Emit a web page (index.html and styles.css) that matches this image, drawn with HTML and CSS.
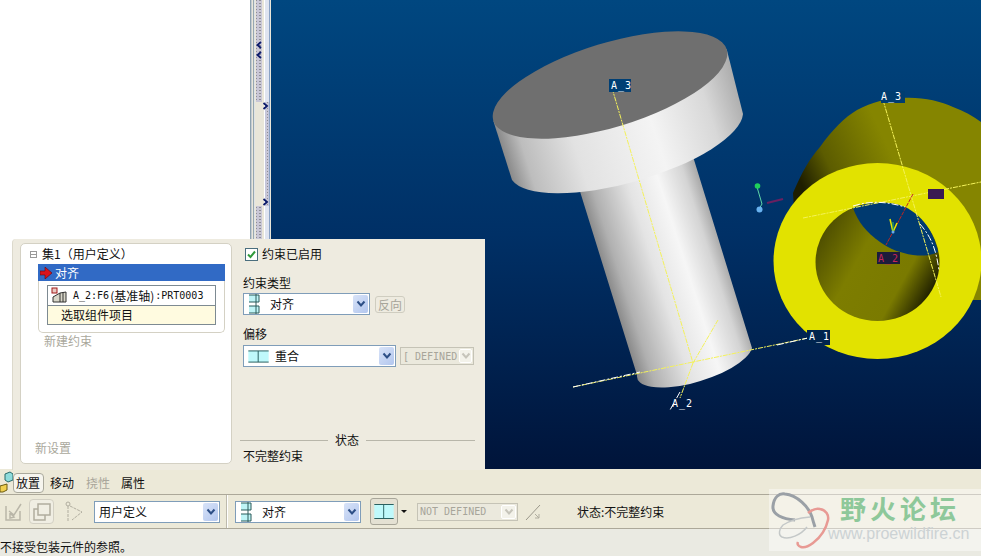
FILE: index.html
```html
<!DOCTYPE html>
<html lang="zh">
<head>
<meta charset="utf-8">
<title>Pro/E 装配</title>
<link rel="stylesheet" href="styles.css">
</head>
<body>
<svg class="defs" width="0" height="0" aria-hidden="true">
  <symbol id="chev" viewBox="0 0 10 8"><path d="M1.5 1.5 5 5.5 8.500 1.500" fill="none" stroke="currentColor" stroke-width="2"/></symbol>
  <symbol id="align" viewBox="0 0 12 20"><rect x="1" y="1" width="10" height="7" fill="#bff4f6"/><rect x="1" y="12" width="10" height="7" fill="#bff4f6"/><path d="M1 1h10v7H1M1 12h10v7H1M8 0v20" fill="none" stroke="#2a5a5a" stroke-width="1"/></symbol>
  <symbol id="mate" viewBox="0 0 32 18"><rect x=".5" y=".5" width="31" height="17" fill="#bff9fb"/><path d="M.5 .5h31M.5 17.500h31M15.500 .5v17" fill="none" stroke="#2a6060" stroke-width="1.500"/></symbol>
</svg>
<div class="app">
  <div class="work">
    <div class="tree-pane"></div>
    <div class="splitter">
      <svg width="21" height="469" viewBox="0 0 21 469">
        <defs><pattern id="dots" width="4" height="3" patternUnits="userSpaceOnUse"><rect width="4" height="3" fill="#c9c7d6"/><rect x="1" y="0" width="2" height="1" fill="#8f8f96"/></pattern></defs>
        <rect width="21" height="469" fill="#e9e6d9"/>
        <rect x="0" width="1" height="469" fill="#8fa3b0"/><rect x="1" width="1" height="469" fill="#c6ccd2"/>
        <rect x="3" width="1" height="469" fill="#97a7b0"/><rect x="4" width="1" height="469" fill="#dfe3e6"/>
        <rect x="6" y="0" width="6" height="102" fill="url(#dots)"/>
        <rect x="6" y="206" width="6" height="263" fill="url(#dots)"/>
        <rect x="14" y="0" width="1" height="469" fill="#fff"/>
        <rect x="15" y="0" width="4" height="102" fill="#dfe4f0"/>
        <rect x="15" y="102" width="4" height="104" fill="#c3c6dc"/>
        <rect x="16" y="102" width="2" height="104" fill="url(#dots)"/>
        <rect x="15" y="206" width="4" height="263" fill="#dfe4f0"/>
        <rect x="19" width="1" height="469" fill="#8aa2c4"/>
        <path d="M11 42 7.500 45 11 48M11 52 7.500 55 11 58" fill="none" stroke="#0b1a6a" stroke-width="1.800"/>
        <path d="M13.500 103 17 106 13.500 109M13.500 199 17 202 13.500 205" fill="none" stroke="#0b1a6a" stroke-width="1.800"/>
      </svg>
    </div>
    <div class="viewport">
      <svg class="scene" viewBox="271 0 710 469" width="710" height="469">
        <defs>
          <linearGradient id="bg" x1="0" y1="0" x2="0" y2="1"><stop offset="0" stop-color="#004780"/><stop offset=".5" stop-color="#003066"/><stop offset="1" stop-color="#00143a"/></linearGradient>
          <linearGradient id="head" gradientUnits="userSpaceOnUse" x1="505" y1="175" x2="745" y2="100"><stop offset="0" stop-color="#7d7d7d"/><stop offset=".1" stop-color="#bdbdbd"/><stop offset=".3" stop-color="#e2e2e2"/><stop offset=".62" stop-color="#f4f4f4"/><stop offset=".85" stop-color="#d8d8d8"/><stop offset="1" stop-color="#a9a9a9"/></linearGradient>
          <linearGradient id="shank" gradientUnits="userSpaceOnUse" x1="600" y1="290" x2="725" y2="250"><stop offset="0" stop-color="#6f6f6f"/><stop offset=".18" stop-color="#b0b0b0"/><stop offset=".45" stop-color="#e4e4e4"/><stop offset=".68" stop-color="#f6f6f6"/><stop offset=".88" stop-color="#d4d4d4"/><stop offset="1" stop-color="#a2a2a2"/></linearGradient>
          <linearGradient id="body" gradientUnits="userSpaceOnUse" x1="795" y1="170" x2="880" y2="130"><stop offset="0" stop-color="#1e1e00"/><stop offset=".35" stop-color="#5c5c00"/><stop offset="1" stop-color="#858500"/></linearGradient>
          <linearGradient id="hole" gradientUnits="userSpaceOnUse" x1="818" y1="235" x2="935" y2="300"><stop offset="0" stop-color="#4c4c00"/><stop offset=".35" stop-color="#7d7d00"/><stop offset=".72" stop-color="#7a7a00"/><stop offset="1" stop-color="#0c0c00"/></linearGradient>
        </defs>
        <rect x="271" y="0" width="710" height="469" fill="url(#bg)"/>

        <path d="M578 185 637 375A60 21 -17 0 0 752 348L691 150Z" fill="url(#shank)"/>
        <path d="M493.300 120.700 512 180A121 40 -16 0 0 743 114L726.700 49.300Z" fill="url(#head)"/>
        <ellipse cx="610" cy="85" rx="122" ry="42" transform="rotate(-17 610 85)" fill="#6f6f6f"/>

        <path class="axis-y" d="M612 88 693 363M573 387 693 362 808 338M693 363 718 320M693 363 680 398"/>
        <path class="axis-w" d="M573 387 640 372M777 345 808 338M680 392 670 410"/>

        <path d="M793 193C802 172 810 158 820 147C832 130 845 117 857 110C872 102 888 98 903 98C922 97 940 101 953 107C964 111 973 116 981 122V300H800Z" fill="url(#body)"/>
        <ellipse cx="877.500" cy="261" rx="104" ry="98" fill="#e2e200"/>
        <ellipse cx="877.500" cy="262" rx="62" ry="59" fill="url(#hole)"/>
        <path d="M853 208C870 201 890 201 905 207C922 215 934 232 938 252C930 256 922 256 913 255C900 253 890 249 880 242C866 232 858 222 853 208Z" fill="#003a70"/>

        <path class="axis-y" d="M883 100 941 297M803 218 981 182"/>
        <path class="axis-w" d="M853 206C872 200 888 202 905 207M920 224C932 238 936 250 939 270"/>
        <path d="M913 194 886 245" stroke="#c2251f" stroke-width="1" fill="none" stroke-dasharray="4 1"/>
        <path d="M897 223 893 232M890 219 893 232" stroke="#e6e600" stroke-width="1.500" fill="none"/>
        <path d="M893 222 893 232" stroke="#35c060" stroke-width="1" fill="none"/>
        <circle cx="893" cy="232" r="1.500" fill="#6aa8e8"/>

        <path d="M757 187 762 204 759 209" stroke="#5fd6a8" stroke-width="1" fill="none"/>
        <circle cx="757.500" cy="186" r="2.800" fill="#1fd05a"/>
        <circle cx="759.500" cy="209.500" r="3" fill="#68b2f0"/>
        <path d="M767 203 783 199" stroke="#6a2060" stroke-width="2" fill="none"/>

        <g class="labels">
          <rect x="609" y="79" width="22" height="13" fill="#003f74"/>
          <text x="611" y="89">A_3</text>
          <rect x="881" y="91" width="24" height="12" fill="#003d70"/>
          <text x="881" y="100">A_3</text>
          <rect x="807" y="330" width="23" height="15" fill="#00244e"/>
          <text x="809" y="340">A_1</text>
          <text x="672" y="407">A_2</text>
          <rect x="877" y="252" width="23" height="12" fill="#1c1c3c"/>
          <text x="878" y="262" class="red">A_2</text>
          <rect x="928" y="189" width="16" height="10" fill="#3a1a52"/>
        </g>
      </svg>
    </div>
  </div>

  <div class="tabs">
    <svg class="tab-icon" width="13" height="24" viewBox="0 0 13 24">
      <path d="M5 3 10 1 13 3V9L8 11 5 9Z" fill="#8fdcdc" stroke="#2a6a6a"/>
      <path d="M0 15 7 13V19L3 21 0 21Z" fill="#f0d050" stroke="#6a5a10"/>
    </svg>
    <span class="tab on">放置</span>
    <span class="tab">移动</span>
    <span class="tab off">挠性</span>
    <span class="tab">属性</span>
  </div>

  <div class="toolbar">
    <svg class="tool" width="20" height="22" viewBox="0 0 20 22"><path d="M2 5V19H16V10M5 10 10 14 17 3M6 17V12L10 16Z" fill="none" stroke="#b9b6a8" stroke-width="1.500"/></svg>
    <span class="tool-btn"><svg width="20" height="20" viewBox="0 0 20 20"><path d="M6 2H18V13H13V18H2V7H6ZM6 7V13H13" fill="none" stroke="#b0ad9f" stroke-width="1.500"/></svg></span>
    <svg class="tool tool-c" width="20" height="22" viewBox="0 0 20 22"><circle cx="4" cy="3" r="2" fill="none" stroke="#b0ad9f"/><path d="M4 5V20M6 5 18 11 8 19" fill="none" stroke="#b0ad9f" stroke-dasharray="3 1"/></svg>
    <div class="select s-user"><span class="val">用户定义</span><span class="arrow"><svg width="10" height="8"><use href="#chev"/></svg></span></div>
    <span class="vsep"></span>
    <div class="select s-align"><svg class="ico" width="12" height="20"><use href="#align"/></svg><span class="val">对齐</span><span class="arrow"><svg width="10" height="8"><use href="#chev"/></svg></span></div>
    <span class="mate-btn"><svg width="20" height="15" viewBox="0 0 32 18" preserveAspectRatio="none"><use href="#mate"/></svg></span>
    <span class="caret"></span>
    <div class="select disabled s-nd"><span class="val">NOT DEFINED</span><span class="arrow"><svg width="10" height="8"><use href="#chev"/></svg></span></div>
    <svg class="tool tool-flip" width="16" height="18" viewBox="0 0 16 18"><path d="M1 17 15 2" stroke="#9a978a"/><path d="M10 11 14 15M14 11V15H10" fill="none" stroke="#b0ad9f"/></svg>
    <span class="tool-status">状态:不完整约束</span>
  </div>

  <div class="status">不接受包装元件的参照。</div>

  <div class="popup">
    <div class="card">
      <div class="set-head"><span class="minus"></span>集1（用户定义）</div>
      <div class="sel-row"><svg width="13" height="12" viewBox="0 0 13 12"><path d="M0 4H5V0L12 6 5 12V8H0Z" fill="#d8131d" stroke="#5a0a10" stroke-width=".6"/></svg>对齐</div>
      <div class="group">
        <div class="refs">
          <div class="ref"><svg width="17" height="17" viewBox="0 0 17 17"><rect x="1" y="1" width="5" height="5" fill="#e9c8c0" stroke="#a01818"/><path d="M2 15V10L9 6 15 5V15ZM9 15V6M12 15V5" fill="#d8d6c8" stroke="#333" stroke-width="1"/></svg><span class="mono">A_2:F6</span><span class="cn">(基准轴)</span><span class="mono">:PRT0003</span></div>
          <div class="ref pick">选取组件项目</div>
        </div>
      </div>
      <div class="muted new-con">新建约束</div>
      <div class="muted new-set">新设置</div>
    </div>
    <div class="side">
      <label class="check"><span class="box"><svg width="9" height="9" viewBox="0 0 9 9"><path d="M1 4.500 3.500 7 8 1.500" fill="none" stroke="#2f9a3a" stroke-width="2"/></svg></span>约束已启用</label>
      <div class="lbl l1">约束类型</div>
      <div class="row">
        <div class="select s-type"><svg class="ico" width="12" height="20"><use href="#align"/></svg><span class="val">对齐</span><span class="arrow"><svg width="10" height="8"><use href="#chev"/></svg></span></div>
        <span class="flip">反向</span>
      </div>
      <div class="lbl l2">偏移</div>
      <div class="row">
        <div class="select s-off"><svg class="ico" width="21" height="13"><use href="#mate"/></svg><span class="val">重合</span><span class="arrow"><svg width="10" height="8"><use href="#chev"/></svg></span></div>
        <div class="select disabled s-def"><span class="val">[ DEFINED</span><span class="arrow"><svg width="10" height="8"><use href="#chev"/></svg></span></div>
      </div>
      <div class="legend"><span>状态</span></div>
      <div class="state">不完整约束</div>
    </div>
  </div>

  <div class="mark">
    <svg width="70" height="62" viewBox="0 0 70 62">
      <path d="M26 31C14 30 3 26 4 17C5 8 10 4 16 5C28 6 40 18 43 28C44 32 45 35 46 38" fill="none" stroke="#9aa0a6" stroke-width="3"/>
      <path d="M41 28C30 29 20 32 14 36C10 40 9 46 13 48C20 51 32 46 38 38" fill="none" stroke="#c4c8c8" stroke-width="1.500"/>
      <path d="M39 24C44 20 48 19 51 20C57 21 60 26 59 31C57 40 52 48 44 54C40 57 35 59 32 58C29 57 28 55 29 53" fill="none" stroke="#e89a94" stroke-width="2.500"/>
    </svg>
    <div class="mark-text">
      <div class="mark-cn">野火论坛</div>
      <div class="mark-url">www.proewildfire.cn</div>
    </div>
  </div>
</div>
</body>
</html>
```
FILE: styles.css
```css
* { box-sizing: border-box; }
html, body { margin: 0; padding: 0; }
body {
  width: 981px;
  height: 556px;
  overflow: hidden;
  font: 12px/16px "Noto Sans CJK SC", "Liberation Sans", sans-serif;
  color: #111;
  background: #ece9d8;
}
.defs { position: absolute; }
.app { position: relative; width: 981px; height: 556px; display: flex; flex-direction: column; overflow: hidden; }

.work { display: flex; height: 469px; }
.tree-pane { width: 250px; background: #fff; }
.splitter { width: 21px; }
.splitter svg, .scene { display: block; }
.viewport { flex: 1; }

.axis-y { fill: none; stroke: #f4f25a; stroke-width: 1; stroke-dasharray: 5 1 2 1; }
.axis-w { fill: none; stroke: #fff; stroke-width: 1; stroke-dasharray: 7 2 2 2; }
.labels text { font: 10px "DejaVu Sans Mono", monospace; fill: #fff; letter-spacing: 1px; }
.labels text.red { fill: #c2255a; }

/* bottom bars */
.tabs { height: 26px; display: flex; align-items: center; padding-top: 2px; border-bottom: 1px solid #aca899; background: #ece9d8; }
.tab-icon { flex: none; }
.tab { height: 20px; padding: 2px 3px; margin-right: 6px; }
.tab:nth-of-type(3) { margin-right: 5px; }
.tab:nth-of-type(4) { margin-right: 10px; }
.tab.on { margin-right: 3px; background: #f6f5ee; border: 1px solid #aaa99c; border-radius: 4px; padding: 1px 2px; width: 31px; }
.tab.off { color: #a9a69a; }

.toolbar { height: 34px; display: flex; align-items: center; padding-left: 4px; border-bottom: 1px solid #aca899; background: #ece9d8; }
.tool { flex: none; }
.tool-btn { flex: none; width: 25px; height: 25px; margin-left: 5px; display: flex; align-items: center; justify-content: center; border: 1px solid #d3d0c3; border-radius: 4px; background: #f0eee3; }
.tool-c { margin-left: 10px; }
.vsep { flex: none; width: 2px; height: 33px; margin: 0 7px 0 6px; background: #bdbaac; border-right: 1px solid #fff; }
.mate-btn { flex: none; width: 28px; height: 27px; margin-left: 9px; display: flex; align-items: center; justify-content: center; background: #e4e1d3; border: 1px solid #a8a699; border-radius: 3px; }
.caret { flex: none; width: 0; height: 0; margin-left: 3px; border: 3px solid transparent; border-top: 3px solid #111; border-bottom: 0; }
.tool-flip { margin-left: 7px; }
.tool-status { margin-left: 36px; }

.status { flex: 1; padding: 10px 0 0; background: #eaeae2; }

/* select */
.select { flex: none; display: flex; align-items: center; background: #fff; border: 1px solid #7f9db9; }
.select .val { flex: 1; white-space: nowrap; overflow: hidden; }
.select .ico { flex: none; }
.select .arrow { flex: none; width: 15px; margin: 1px; align-self: stretch; display: flex; align-items: center; justify-content: center; background: linear-gradient(135deg, #d8e3f8, #b2c6ee); border-radius: 2px; color: #2d4f86; }
.select .arrow svg { display: block; }
.select.disabled { background: #ebe9dd; border-color: #c5c3b6; color: #a7a59a; }
.select.disabled .val { font: 10px "DejaVu Sans Mono", monospace; padding-left: 2px; }
.select.disabled .arrow { background: #f3f2ea; color: #c6c4ba; border: 1px solid #fff; }
.s-user { width: 126px; height: 22px; margin-left: 10px; }
.s-user .val { padding-left: 4px; }
.s-align { width: 126px; height: 22px; }
.s-align .ico { margin-left: 4px; }
.s-align .val { padding-left: 10px; }
.s-nd { width: 101px; height: 18px; margin-left: 10px; }
.s-type { width: 127px; height: 22px; }
.s-type .ico { margin-left: 4px; }
.s-type .val { padding-left: 10px; }
.s-off { width: 153px; height: 22px; }
.s-off .ico { margin-left: 4px; }
.s-off .val { padding-left: 6px; }
.s-def { width: 74px; height: 18px; margin-left: 4px; }
.s-def .val { padding-left: 0; }
.s-def .arrow { width: 13px; }

/* popup */
.popup { position: absolute; left: 12px; top: 239px; width: 473px; height: 231px; display: flex; background: #eeebe0; border-radius: 4px 0 0 0; border-left: 1px solid #dcd9cc; }
.card { position: relative; display: flex; flex-direction: column; width: 212px; height: 221px; margin: 4px 0 0 7px; background: #fff; border: 1px solid #d4d1c4; border-radius: 5px; padding: 2px 6px 7px 17px; }
.set-head { display: flex; align-items: center; height: 16px; margin-left: -8px; }
.minus { width: 7px; height: 7px; margin-right: 5px; border: 1px solid #999; background: linear-gradient(#999, #999) center / 5px 1px no-repeat; }
.sel-row { display: flex; align-items: center; gap: 2px; height: 17px; margin-top: 2px; padding-left: 2px; background: #316ac5; color: #fff; }
.group { height: 52px; padding: 4px 8px; border: 1px solid #d4d1c4; border-top: 0; border-radius: 0 0 5px 5px; }
.refs { height: 40px; border: 1px solid #7d8a92; }
.ref { display: flex; align-items: center; height: 19px; padding-left: 3px; background: #fff; white-space: nowrap; }
.ref .mono { font: 10px "DejaVu Sans Mono", monospace; }
.ref svg { margin-right: 5px; flex: none; }
.ref .cn { font-size: 12px; padding: 0 1px; }
.ref.pick { height: 19px; padding-left: 13px; background: #fffbe0; border-top: 1px solid #7d8a92; }
.muted { color: #aaa89c; }
.new-con { margin: 0 0 0 6px; line-height: 16px; }
.new-set { margin-top: auto; margin-left: -3px; }

.side { display: flex; flex-direction: column; width: 232px; margin-left: 11px; padding-top: 7px; padding-bottom: 6px; }
.check { display: flex; align-items: center; height: 16px; }
.box { display: flex; align-items: center; justify-content: center; width: 13px; height: 13px; margin: 0 4px 0 2px; background: #fff; border: 1px solid #4a6e7e; }
.lbl { height: 16px; }
.l1 { margin-top: 13px; margin-bottom: 2px; }
.l2 { margin-top: 11px; margin-bottom: 3px; }
.row { display: flex; align-items: center; }
.flip { flex: none; width: 30px; height: 17px; margin-left: 5px; text-align: center; line-height: 15px; color: #a7a59a; background: #eeebe0; border: 1px solid #cfcdc0; border-radius: 3px; }
.legend { margin-top: auto; height: 16px; margin-left: -3px; display: flex; align-items: center; background: linear-gradient(#b8b6aa, #b8b6aa) center / 100% 1px no-repeat; }
.legend span { margin-left: 88px; padding: 0 7px; background: #eeebe0; }
.state { height: 16px; }

/* watermark */
.mark { position: absolute; left: 769px; top: 489px; width: 212px; height: 62px; display: flex; background: rgba(255, 255, 255, .42); }
.mark svg { flex: none; }
.mark-text { margin-left: -2px; white-space: nowrap; }
.mark-cn { font: 700 26px/30px "Noto Sans CJK SC", sans-serif; letter-spacing: 4px; color: #8ec89a; margin: 4px 0 0 3px; }
.mark-url { font: 16px/20px "Liberation Sans", sans-serif; color: #ccd2d4; margin-left: -9px; margin-top: 1px; }
```
